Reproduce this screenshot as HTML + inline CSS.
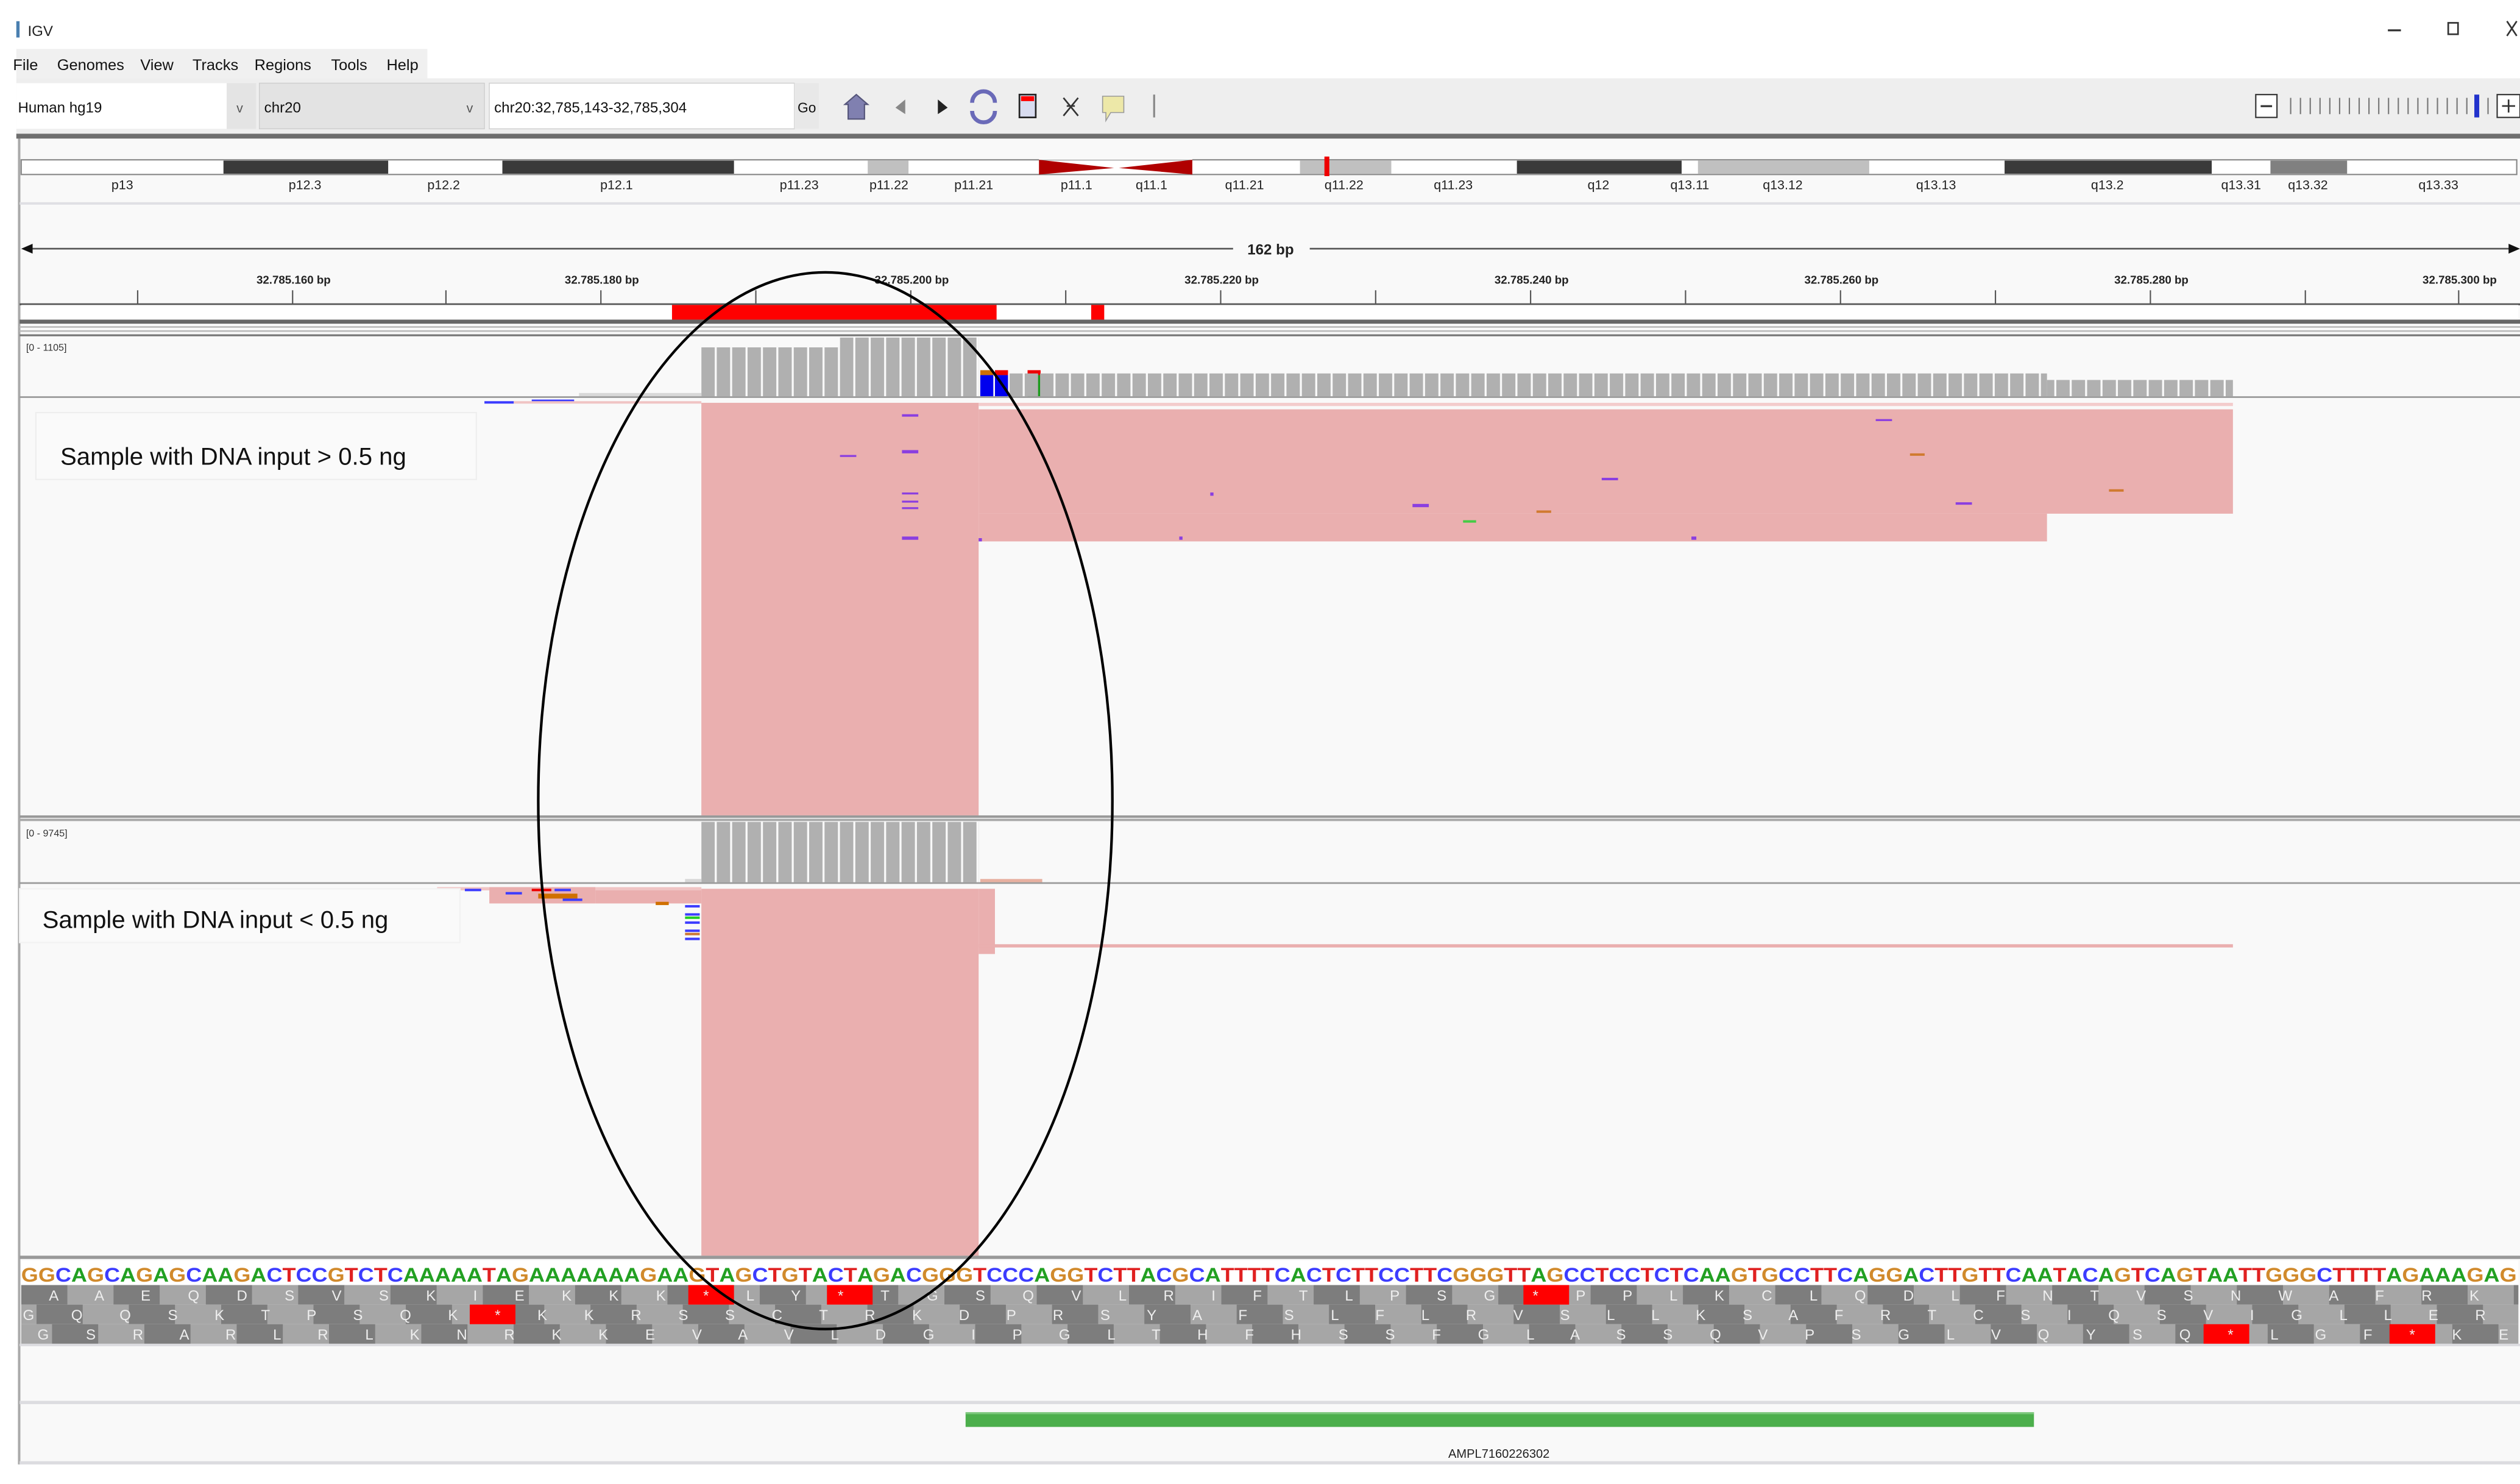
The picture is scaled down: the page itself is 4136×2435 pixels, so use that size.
<!DOCTYPE html>
<html><head><meta charset="utf-8">
<style>
html,body{margin:0;padding:0;background:#fff;}
svg{display:block;}
.t{font-family:"Liberation Sans",sans-serif;}
.a{fill:#22a022}.c{fill:#3c3cff}.g{fill:#d18a2c}.r{fill:#e02020}
.cb{font-family:"Liberation Sans",sans-serif;font-size:7px;font-weight:bold;fill:#222;text-anchor:middle;}
.tk{font-family:"Liberation Sans",sans-serif;font-size:7.5px;fill:#222;text-anchor:middle;}
.aa{font-family:"Liberation Sans",sans-serif;font-size:9px;fill:#eee;}
</style></head>
<body>
<svg width="4136" height="2435" viewBox="0 0 1545 910" preserveAspectRatio="none" xmlns="http://www.w3.org/2000/svg">
<defs>
<pattern id="cov" x="430" y="0" width="9.44" height="10" patternUnits="userSpaceOnUse">
<rect x="0" y="0" width="8.2" height="10" fill="#b0b0b0"/></pattern>
<pattern id="aa1" x="13" y="0" width="56.6" height="12" patternUnits="userSpaceOnUse">
<rect x="0" y="0" width="28.3" height="12" fill="#7d7d7d"/><rect x="28.3" y="0" width="28.3" height="12" fill="#a6a6a6"/></pattern>
<pattern id="aa2" x="22.4" y="0" width="56.6" height="12" patternUnits="userSpaceOnUse">
<rect x="0" y="0" width="28.3" height="12" fill="#7d7d7d"/><rect x="28.3" y="0" width="28.3" height="12" fill="#a6a6a6"/></pattern>
<pattern id="aa3" x="31.9" y="0" width="56.6" height="12" patternUnits="userSpaceOnUse">
<rect x="0" y="0" width="28.3" height="12" fill="#7d7d7d"/><rect x="28.3" y="0" width="28.3" height="12" fill="#a6a6a6"/></pattern>
</defs>
<rect x="0" y="0" width="1545" height="910" fill="#fff"/>
<!-- title bar -->
<rect x="10" y="13" width="2" height="10" fill="#4a7fb0"/>
<text x="17" y="22" class="t" font-size="9" fill="#222">IGV</text>
<rect x="1464" y="18" width="8" height="1.2" fill="#333"/>
<rect x="1501" y="14" width="6" height="7" fill="none" stroke="#333" stroke-width="1"/>
<path d="M1537 13 L1543 22 M1543 13 L1537 22" stroke="#333" stroke-width="1"/>
<!-- menu -->
<rect x="10" y="30" width="252" height="18" fill="#f0f0f0"/>
<text y="43" class="t" font-size="9.5" fill="#111"><tspan x="8">File</tspan><tspan x="35">Genomes</tspan><tspan x="86">View</tspan><tspan x="118">Tracks</tspan><tspan x="156">Regions</tspan><tspan x="203">Tools</tspan><tspan x="237">Help</tspan></text>
<!-- toolbar -->
<rect x="10" y="48" width="1535" height="34" fill="#eeeeee"/>
<rect x="10" y="51" width="129" height="28" fill="#fff"/>
<rect x="139" y="51" width="18" height="28" fill="#e4e4e4"/>
<text x="11" y="69" class="t" font-size="9" fill="#111">Human hg19</text>
<text x="145" y="69" class="t" font-size="8" fill="#555">v</text>
<rect x="159" y="51" width="138" height="28" fill="#e3e3e3" stroke="#ccc" stroke-width="0.5"/>
<text x="162" y="69" class="t" font-size="9" fill="#111">chr20</text>
<text x="286" y="69" class="t" font-size="8" fill="#555">v</text>
<rect x="300" y="51" width="187" height="28" fill="#fff" stroke="#ccc" stroke-width="0.5"/>
<text x="303" y="69" class="t" font-size="9" fill="#111">chr20:32,785,143-32,785,304</text>
<rect x="487" y="51" width="15" height="28" fill="#e8e8e8"/>
<text x="489" y="69" class="t" font-size="8.5" fill="#111">Go</text>
<path d="M518 64 L525 58 L532 64 L530 64 L530 73 L520 73 L520 64 Z" fill="#8080b0" stroke="#55557a" stroke-width="0.8"/>
<path d="M555 61 L549 66 L555 70 Z" fill="#888"/>
<path d="M575 61 L581 66 L575 70 Z" fill="#222"/>
<path d="M596 63 A7 7 0 0 1 610 63 M610 68 A7 7 0 0 1 596 68" stroke="#6a6ab8" stroke-width="2.5" fill="none"/>
<rect x="625" y="58" width="10" height="14" fill="#d8dcf0" stroke="#222" stroke-width="1"/>
<rect x="626" y="59" width="8" height="3" fill="#f00"/>
<path d="M652 60 L661 71 M661 60 L652 71 M654 65 L659 65" stroke="#333" stroke-width="1"/>
<path d="M676 59 L689 59 L689 69 L681 69 L678 74 L678 69 L676 69 Z" fill="#ede8a8" stroke="#999" stroke-width="0.6"/>
<rect x="707" y="58" width="1.2" height="14" fill="#888"/>
<rect x="1383" y="58" width="13" height="14" fill="#fff" stroke="#333" stroke-width="0.8"/>
<rect x="1386" y="64.5" width="7" height="1.2" fill="#333"/>
<g fill="#777">
<rect x="1404" y="60" width="0.8" height="10"/><rect x="1410" y="60" width="0.8" height="10"/><rect x="1416" y="60" width="0.8" height="10"/><rect x="1422" y="60" width="0.8" height="10"/><rect x="1428" y="60" width="0.8" height="10"/><rect x="1434" y="60" width="0.8" height="10"/><rect x="1440" y="60" width="0.8" height="10"/><rect x="1446" y="60" width="0.8" height="10"/><rect x="1452" y="60" width="0.8" height="10"/><rect x="1458" y="60" width="0.8" height="10"/><rect x="1464" y="60" width="0.8" height="10"/><rect x="1470" y="60" width="0.8" height="10"/><rect x="1476" y="60" width="0.8" height="10"/><rect x="1482" y="60" width="0.8" height="10"/><rect x="1488" y="60" width="0.8" height="10"/><rect x="1494" y="60" width="0.8" height="10"/><rect x="1500" y="60" width="0.8" height="10"/><rect x="1506" y="60" width="0.8" height="10"/><rect x="1512" y="60" width="0.8" height="10"/><rect x="1525" y="60" width="0.8" height="10"/></g>
<rect x="1517" y="58" width="3" height="14" fill="#2233cc"/>
<rect x="1531" y="58" width="14" height="14" fill="#fff" stroke="#333" stroke-width="0.8"/>
<path d="M1534 65 L1542 65 M1538 61 L1538 69" stroke="#333" stroke-width="1"/>
<rect x="10" y="82" width="1535" height="3" fill="#6e6e6e"/>
<!-- main panel bg -->
<rect x="12" y="85" width="1533" height="813" fill="#f9f9f9"/>
<rect x="11" y="85" width="1.5" height="813" fill="#aaa"/>
<!-- ideogram -->
<rect x="13" y="98" width="1530" height="9" fill="#fff" stroke="#888" stroke-width="0.8"/>
<rect x="137" y="98.5" width="101" height="8" fill="#3a3a3a"/>
<rect x="308" y="98.5" width="142" height="8" fill="#3a3a3a"/>
<rect x="532" y="98.5" width="25" height="8" fill="#c0c0c0"/>
<path d="M637 98 L683 103 L637 107 Z" fill="#b00000"/>
<path d="M731 98 L686 103 L731 107 Z" fill="#b00000"/>
<rect x="637" y="97" width="94" height="1" fill="#f9f9f9"/><rect x="637" y="107.5" width="94" height="1" fill="#f9f9f9"/>
<rect x="797" y="98.5" width="56" height="8" fill="#c0c0c0"/>
<rect x="812" y="96" width="3" height="12" fill="#e00"/>
<rect x="930" y="98.5" width="101" height="8" fill="#3a3a3a"/>
<rect x="1041" y="98.5" width="105" height="8" fill="#c0c0c0"/>
<rect x="1229" y="98.5" width="127" height="8" fill="#3a3a3a"/>
<rect x="1392" y="98.5" width="47" height="8" fill="#808080"/>
<g class="cb" style="font-weight:normal;font-size:8px">
<text x="75" y="116">p13</text><text x="187" y="116">p12.3</text><text x="272" y="116">p12.2</text><text x="378" y="116">p12.1</text><text x="490" y="116">p11.23</text><text x="545" y="116">p11.22</text><text x="597" y="116">p11.21</text><text x="660" y="116">p11.1</text><text x="706" y="116">q11.1</text><text x="763" y="116">q11.21</text><text x="824" y="116">q11.22</text><text x="891" y="116">q11.23</text><text x="980" y="116">q12</text><text x="1036" y="116">q13.11</text><text x="1093" y="116">q13.12</text><text x="1187" y="116">q13.13</text><text x="1292" y="116">q13.2</text><text x="1374" y="116">q13.31</text><text x="1415" y="116">q13.32</text><text x="1495" y="116">q13.33</text></g>
<rect x="12" y="124" width="1533" height="1.5" fill="#e0e0e4"/>
<!-- ruler -->
<rect x="16" y="152" width="740" height="1" fill="#555"/>
<rect x="803" y="152" width="737" height="1" fill="#555"/>
<path d="M13 152.5 L20 149.5 L20 155.5 Z" fill="#111"/>
<path d="M1545 152.5 L1538 149.5 L1538 155.5 Z" fill="#111"/>
<text x="779" y="156" class="cb" style="font-size:9px">162 bp</text>
<g class="cb"><text x="180" y="174">32.785.160 bp</text><text x="369" y="174">32.785.180 bp</text><text x="559" y="174">32.785.200 bp</text><text x="749" y="174">32.785.220 bp</text><text x="939" y="174">32.785.240 bp</text><text x="1129" y="174">32.785.260 bp</text><text x="1319" y="174">32.785.280 bp</text><text x="1508" y="174">32.785.300 bp</text></g>
<g fill="#555"><rect x="84" y="178" width="0.8" height="9"/><rect x="179" y="178" width="0.8" height="9"/><rect x="273" y="178" width="0.8" height="9"/><rect x="368" y="178" width="0.8" height="9"/><rect x="463" y="178" width="0.8" height="9"/><rect x="558" y="178" width="0.8" height="9"/><rect x="653" y="178" width="0.8" height="9"/><rect x="748" y="178" width="0.8" height="9"/><rect x="843" y="178" width="0.8" height="9"/><rect x="938" y="178" width="0.8" height="9"/><rect x="1033" y="178" width="0.8" height="9"/><rect x="1128" y="178" width="0.8" height="9"/><rect x="1223" y="178" width="0.8" height="9"/><rect x="1318" y="178" width="0.8" height="9"/><rect x="1413" y="178" width="0.8" height="9"/><rect x="1507" y="178" width="0.8" height="9"/></g>
<rect x="12" y="186" width="1533" height="1.2" fill="#555"/>
<rect x="13" y="187" width="1531" height="9" fill="#fff"/>
<rect x="412" y="187" width="199" height="9" fill="#f00"/>
<rect x="669" y="187" width="8" height="9" fill="#f00"/>
<rect x="12" y="196" width="1533" height="2.5" fill="#666"/>
<rect x="12" y="200" width="1533" height="1" fill="#bbb"/>
<rect x="12" y="202.5" width="1533" height="1" fill="#bbb"/>
<rect x="12" y="205" width="1533" height="1.2" fill="#777"/>
<!-- track 1 coverage -->
<text x="16" y="215" class="t" font-size="6" fill="#333">[0 - 1105]</text>
<rect x="430" y="213" width="85" height="30" fill="url(#cov)"/>
<rect x="515" y="207" width="85" height="36" fill="url(#cov)"/>
<rect x="601" y="230" width="8" height="13" fill="#0000ee"/><rect x="601" y="227" width="8" height="3" fill="#d07000"/>
<rect x="610" y="230" width="8" height="13" fill="#0000ee"/><rect x="610" y="227" width="8" height="3" fill="#e00"/>
<rect x="630" y="230" width="8" height="13" fill="#1a9a1a"/><rect x="630" y="227" width="8" height="3" fill="#e00"/>
<rect x="619" y="229" width="636" height="14" fill="url(#cov)"/>
<rect x="1255" y="233" width="114" height="10" fill="url(#cov)"/>
<rect x="355" y="241" width="75" height="2" fill="#d8d8d8"/>
<rect x="12" y="243" width="1533" height="1" fill="#999"/>
<!-- track 1 reads -->
<rect x="297" y="246" width="18" height="1.5" fill="#3c3cff"/>
<rect x="326" y="245" width="26" height="1.5" fill="#3c3cff"/>
<rect x="315" y="246" width="115" height="1.5" fill="#f0c4c4"/>
<rect x="430" y="247" width="170" height="253" fill="#eaafaf"/>
<rect x="600" y="247" width="769" height="2" fill="#f3cccc"/>
<rect x="600" y="251" width="769" height="64" fill="#eaafaf"/>
<rect x="600" y="315" width="655" height="17" fill="#eaafaf"/>
<g fill="#8a3ee0"><rect x="553" y="254" width="10" height="1.5"/><rect x="553" y="276" width="10" height="2"/><rect x="515" y="279" width="10" height="1.2"/><rect x="553" y="302" width="10" height="1.2"/><rect x="553" y="307" width="10" height="1.2"/><rect x="553" y="311" width="10" height="1.2"/><rect x="553" y="329" width="10" height="2"/><rect x="1150" y="257" width="10" height="1.2"/><rect x="982" y="293" width="10" height="1.5"/><rect x="866" y="309" width="10" height="2"/><rect x="1199" y="308" width="10" height="1.5"/><rect x="742" y="302" width="2" height="2"/><rect x="600" y="330" width="2" height="2"/><rect x="723" y="329" width="2" height="2"/><rect x="1037" y="329" width="3" height="2"/></g>
<rect x="1171" y="278" width="9" height="1.5" fill="#d07a30"/><rect x="942" y="313" width="9" height="1.5" fill="#d07a30"/><rect x="1293" y="300" width="9" height="1.5" fill="#d07a30"/><rect x="897" y="319" width="8" height="1.5" fill="#4c4"/>
<rect x="22" y="253" width="270" height="41" fill="#fafafa" stroke="#eee" stroke-width="0.8"/>
<text x="37" y="285" class="t" font-size="15" fill="#111">Sample with DNA input &gt; 0.5 ng</text>
<!-- panel separator -->
<rect x="12" y="500" width="1533" height="1.5" fill="#999"/>
<rect x="12" y="502" width="1533" height="1.5" fill="#aaa"/>
<!-- track 2 -->
<text x="16" y="513" class="t" font-size="6" fill="#333">[0 - 9745]</text>
<rect x="430" y="504" width="170" height="37" fill="url(#cov)"/>
<rect x="420" y="539" width="10" height="2" fill="#d8d8d8"/>
<rect x="601" y="539" width="38" height="2" fill="#e8b0a0"/>
<rect x="12" y="541" width="1533" height="1" fill="#999"/>
<rect x="268" y="544" width="162" height="2" fill="#f0c4c4"/>
<rect x="300" y="544" width="65" height="10" fill="#eaafaf"/>
<g><rect x="285" y="545" width="10" height="1.5" fill="#3c3cff"/><rect x="310" y="547" width="10" height="1.5" fill="#3c3cff"/><rect x="330" y="548" width="24" height="3" fill="#d07000"/><rect x="326" y="545" width="12" height="1.5" fill="#e00"/><rect x="345" y="551" width="12" height="1.5" fill="#3c3cff"/><rect x="340" y="545" width="10" height="1.5" fill="#3c3cff"/></g>
<rect x="365" y="546" width="65" height="8" fill="#eaafaf"/>
<rect x="402" y="553" width="8" height="2" fill="#d07000"/>
<g fill="#3c3cff"><rect x="420" y="555" width="9" height="1.5"/><rect x="420" y="560" width="9" height="1.5"/><rect x="420" y="565" width="9" height="1.5"/><rect x="420" y="570" width="9" height="1.5"/><rect x="420" y="575" width="9" height="1.5"/></g>
<rect x="420" y="562" width="9" height="1.5" fill="#2c2"/><rect x="420" y="572" width="9" height="1.5" fill="#c73"/>
<rect x="430" y="545" width="170" height="225" fill="#eaafaf"/>
<rect x="600" y="545" width="10" height="40" fill="#eaafaf"/>
<rect x="600" y="579" width="769" height="2" fill="#eaafaf"/>
<rect x="12" y="545" width="270" height="33" fill="#fafafa" stroke="#f2f2f2" stroke-width="0.8"/>
<text x="26" y="569" class="t" font-size="15" fill="#111">Sample with DNA input &lt; 0.5 ng</text>
<!-- sequence -->
<rect x="12" y="770" width="1533" height="2" fill="#999"/>
<rect x="13" y="773" width="1531" height="15" fill="#fff"/>
<text x="13" y="786" class="t" font-size="12" font-weight="bold" textLength="1530" lengthAdjust="spacingAndGlyphs"><tspan class="g">GG</tspan><tspan class="c">C</tspan><tspan class="a">A</tspan><tspan class="g">G</tspan><tspan class="c">C</tspan><tspan class="a">A</tspan><tspan class="g">G</tspan><tspan class="a">A</tspan><tspan class="g">G</tspan><tspan class="c">C</tspan><tspan class="a">AA</tspan><tspan class="g">G</tspan><tspan class="a">A</tspan><tspan class="c">C</tspan><tspan class="r">T</tspan><tspan class="c">CC</tspan><tspan class="g">G</tspan><tspan class="r">T</tspan><tspan class="c">C</tspan><tspan class="r">T</tspan><tspan class="c">C</tspan><tspan class="a">AAAAA</tspan><tspan class="r">T</tspan><tspan class="a">A</tspan><tspan class="g">G</tspan><tspan class="a">AAAAAAA</tspan><tspan class="g">G</tspan><tspan class="a">AA</tspan><tspan class="g">G</tspan><tspan class="r">T</tspan><tspan class="a">A</tspan><tspan class="g">G</tspan><tspan class="c">C</tspan><tspan class="r">T</tspan><tspan class="g">G</tspan><tspan class="r">T</tspan><tspan class="a">A</tspan><tspan class="c">C</tspan><tspan class="r">T</tspan><tspan class="a">A</tspan><tspan class="g">G</tspan><tspan class="a">A</tspan><tspan class="c">C</tspan><tspan class="g">GGG</tspan><tspan class="r">T</tspan><tspan class="c">CCC</tspan><tspan class="a">A</tspan><tspan class="g">GG</tspan><tspan class="r">T</tspan><tspan class="c">C</tspan><tspan class="r">TT</tspan><tspan class="a">A</tspan><tspan class="c">C</tspan><tspan class="g">G</tspan><tspan class="c">C</tspan><tspan class="a">A</tspan><tspan class="r">TTTT</tspan><tspan class="c">C</tspan><tspan class="a">A</tspan><tspan class="c">C</tspan><tspan class="r">T</tspan><tspan class="c">C</tspan><tspan class="r">TT</tspan><tspan class="c">CC</tspan><tspan class="r">TT</tspan><tspan class="c">C</tspan><tspan class="g">GGG</tspan><tspan class="r">TT</tspan><tspan class="a">A</tspan><tspan class="g">G</tspan><tspan class="c">CC</tspan><tspan class="r">T</tspan><tspan class="c">CC</tspan><tspan class="r">T</tspan><tspan class="c">C</tspan><tspan class="r">T</tspan><tspan class="c">C</tspan><tspan class="a">AA</tspan><tspan class="g">G</tspan><tspan class="r">T</tspan><tspan class="g">G</tspan><tspan class="c">CC</tspan><tspan class="r">TT</tspan><tspan class="c">C</tspan><tspan class="a">A</tspan><tspan class="g">GG</tspan><tspan class="a">A</tspan><tspan class="c">C</tspan><tspan class="r">TT</tspan><tspan class="g">G</tspan><tspan class="r">TT</tspan><tspan class="c">C</tspan><tspan class="a">AA</tspan><tspan class="r">T</tspan><tspan class="a">A</tspan><tspan class="c">C</tspan><tspan class="a">A</tspan><tspan class="g">G</tspan><tspan class="r">T</tspan><tspan class="c">C</tspan><tspan class="a">A</tspan><tspan class="g">G</tspan><tspan class="r">T</tspan><tspan class="a">AA</tspan><tspan class="r">TT</tspan><tspan class="g">GGG</tspan><tspan class="c">C</tspan><tspan class="r">TTTT</tspan><tspan class="a">A</tspan><tspan class="g">G</tspan><tspan class="a">AAA</tspan><tspan class="g">G</tspan><tspan class="a">A</tspan><tspan class="g">G</tspan></text>
<!-- amino acid rows -->
<rect x="13" y="788" width="1531" height="12" fill="url(#aa1)"/>
<rect x="13" y="800" width="1531" height="12" fill="url(#aa2)"/>
<rect x="13" y="812" width="1531" height="12" fill="url(#aa3)"/>
<g fill="#f00"><rect x="422" y="788" width="28" height="12"/><rect x="507" y="788" width="28" height="12"/><rect x="934" y="788" width="28" height="12"/><rect x="288" y="800" width="28" height="12"/><rect x="1351" y="812" width="28" height="12"/><rect x="1465" y="812" width="28" height="12"/></g>
<text x="30" y="797.5" class="aa" textLength="1490" lengthAdjust="spacing">A A E Q D S V S K I E K K K * L Y * T G S Q V L R I F T L P S G * P P L K C L Q D L F N T V S N W A F R K</text>
<text x="14" y="809.5" class="aa" textLength="1510" lengthAdjust="spacing">G Q Q S K T P S Q K * K K R S S C T R K D P R S Y A F S L F L R V S L L K S A F R T C S I Q S V I G L L E R</text>
<text x="23" y="821.5" class="aa" textLength="1515" lengthAdjust="spacing">G S R A R L R L K N R K K E V A V L D G I P G L T H F H S S F G L A S S Q V P S G L V Q Y S Q * L G F * K E</text>
<rect x="12" y="824" width="1533" height="1.5" fill="#dcdce0"/>
<!-- feature track -->
<rect x="12" y="859" width="1533" height="2" fill="#dcdce0"/>
<rect x="592" y="866" width="655" height="9" fill="#4caf4c"/>
<rect x="592" y="866" width="655" height="1.2" fill="#7cc87c"/>
<text x="919" y="894" class="cb" style="font-weight:normal;font-size:7.5px">AMPL7160226302</text>
<rect x="12" y="896" width="1533" height="2" fill="#dcdce0"/>
<!-- ellipse -->
<ellipse cx="506" cy="491" rx="176" ry="324" fill="none" stroke="#000" stroke-width="1.6"/>
</svg>
</body></html>
